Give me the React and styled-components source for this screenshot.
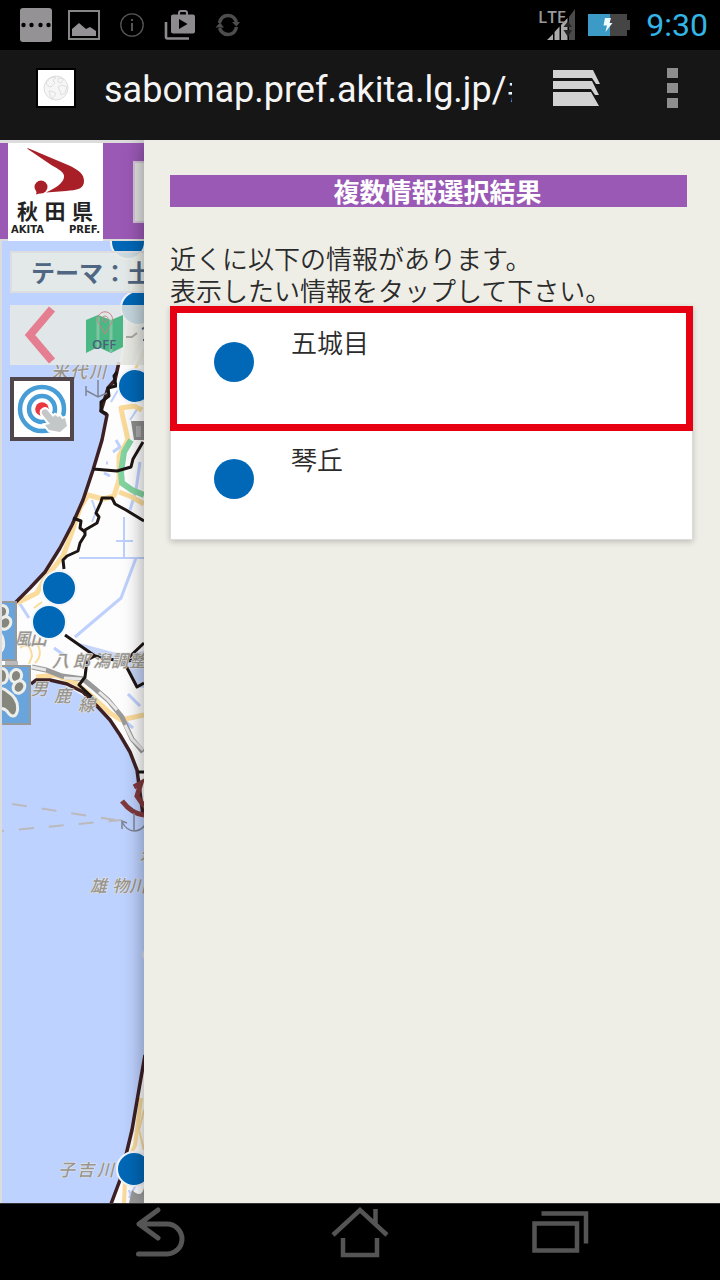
import React, { useState } from "react";
import styled, { createGlobalStyle } from "styled-components";

const GlobalStyle = createGlobalStyle`
  * {
    box-sizing: border-box;
  }
  body {
    margin: 0;
    background: #000;
    font-family: "Noto Sans CJK JP", "Noto Sans", sans-serif;
  }
  button {
    margin: 0;
    padding: 0;
    border: 0;
    background: none;
    font: inherit;
    color: inherit;
    text-align: left;
    cursor: pointer;
  }
  svg {
    display: block;
  }
`;

const Screen = styled.div`
  display: flex;
  flex-direction: column;
  min-height: 100vh;
`;

const StatusBar = styled.header`
  display: flex;
  align-items: center;
  justify-content: space-between;
  height: 50px;
  padding: 0 12px 0 20px;
  background: #000;
`;

const StatusGroup = styled.div`
  display: flex;
  align-items: center;
  gap: ${(props) => props.$gap}px;
`;

const Clock = styled.time`
  margin-left: 4px;
  font-family: Roboto, sans-serif;
  font-size: 32px;
  line-height: 32px;
  color: #33b5e5;
`;

const BrowserBar = styled.div`
  display: flex;
  align-items: center;
  height: 90px;
  padding: 0 42px 14px 36px;
  background: #161616;
`;

const Favicon = styled.div`
  display: flex;
  flex: none;
  align-items: center;
  justify-content: center;
  width: 40px;
  height: 40px;
  border: 2px solid #000;
  background: #fff;
`;

const UrlInput = styled.input`
  flex: 1;
  min-width: 0;
  height: 48px;
  margin: 4px 41px 0 28px;
  padding: 0;
  border: 0;
  outline: 0;
  background: transparent;
  font-family: Roboto, sans-serif;
  font-size: 36px;
  color: #f5f5f5;
`;

const TabsButton = styled.button`
  margin-right: 67px;
`;

const Content = styled.main`
  display: flex;
  flex: 1;
  overflow: hidden;
`;

const MapPane = styled.section`
  display: flex;
  flex: 0 0 20%;
  flex-direction: column;
  min-width: 0;
  overflow: hidden;
`;

const SiteHeader = styled.div`
  display: flex;
  align-items: flex-start;
  height: 101px;
  padding-left: 8px;
  border-top: 3px solid #dcdcdc;
  border-bottom: 2px solid #dcdcdc;
  background: #9b59b6;
`;

const Logo = styled.a`
  display: flex;
  flex: none;
  flex-direction: column;
  width: 95px;
  height: 98px;
  padding: 4px 3px 0;
  background: #fff;
  color: #222;
  text-decoration: none;
`;

const LogoName = styled.span`
  display: flex;
  justify-content: space-between;
  padding: 0 7px 0 6px;
  font-size: 21px;
  font-weight: 700;
  line-height: 26px;
`;

const LogoRoman = styled.span`
  display: flex;
  justify-content: space-between;
  font-family: "DejaVu Sans", sans-serif;
  font-size: 10px;
  font-weight: 700;
  line-height: 14px;
`;

const SearchInput = styled.input`
  flex: none;
  width: 200px;
  height: 62px;
  margin: 18px 0 0 30px;
  border: 2px solid #d2c8d6;
  background: #e2e2e2;
`;

const MapArea = styled.div`
  position: relative;
  flex: 1;
  overflow: hidden;
  border-left: 2px solid #dcdcdc;
  background: #bed2ff;
`;

const MapCanvas = styled.svg`
  position: absolute;
  top: 0;
  left: 0;
`;

const Tools = styled.div`
  position: relative;
  display: flex;
  flex-direction: column;
  align-items: flex-start;
  gap: 12px;
  padding: 10px 0 0 8px;
`;

const ThemeButton = styled.button`
  width: 200px;
  height: 42px;
  padding-left: 19px;
  border: 2px solid #dcdde0;
  background: rgba(232, 234, 229, 0.88);
  font-size: 24px;
  font-weight: 700;
  line-height: 36px;
  color: #4f6783;
`;

const ToolRow = styled.div`
  display: flex;
  align-items: center;
  width: 200px;
  height: 60px;
  background: rgba(232, 234, 229, 0.85);
`;

const TouchButton = styled.button`
  width: 64px;
  height: 64px;
  border: 4px solid #51464b;
  background: #fff;
`;

const PawButton = styled.button`
  position: absolute;
  top: ${(props) => props.$top}px;
  left: ${(props) => props.$left}px;
  width: 60px;
  height: 60px;
  border: 2px solid #979a98;
  background: #69a5dc;
`;

const Panel = styled.section`
  position: relative;
  flex: 1;
  min-width: 0;
  padding: 35px 27px 0 26px;
  background: #eeeee6;
  box-shadow: 0 0 20px rgba(0, 0, 0, 0.4);
  color: #2b2b2b;
`;

const PanelTitle = styled.h1`
  margin: 0 6px 35px 0;
  padding-left: 18px;
  background: #9b59b6;
  font-size: 26px;
  font-weight: 700;
  line-height: 32px;
  text-align: center;
  color: #fff;
`;

const Message = styled.p`
  margin: 0;
  font-size: 26px;
  font-weight: 350;
  line-height: 32px;
`;

const ResultList = styled.ul`
  margin: 0;
  padding: 0;
  list-style: none;
  background: #fff;
  box-shadow: 0 2px 6px rgba(0, 0, 0, 0.2);
`;

const ResultButton = styled.button`
  display: flex;
  align-items: flex-start;
  gap: 37px;
  width: 100%;
  height: ${(props) => (props.$selected ? 125 : 109)}px;
  padding: ${(props) => (props.$selected ? "13px 37px" : "12px 43px")};
  border: ${(props) => (props.$selected ? "7px solid #e60012" : "1px solid #dcdcdc")};
  border-top-width: ${(props) => (props.$selected ? 7 : 0)}px;
  font-size: 26px;
  font-weight: 350;
  line-height: 32px;
`;

const Dot = styled.span`
  flex: none;
  width: 40px;
  height: 40px;
  margin-top: 16px;
  border-radius: 50%;
  background: #0068b7;
`;

const NavBar = styled.nav`
  display: grid;
  grid-template-columns: repeat(3, 1fr);
  height: 77px;
  padding: 0 60px;
  border-top: 1px solid #333;
  background: #000;
`;

const NavButton = styled.button`
  display: flex;
  justify-content: center;
  padding-top: 2px;
`;

const RESULTS = [
  { id: 1, name: "五城目" },
  { id: 2, name: "琴丘" },
];

const PINS = [
  [128, 242],
  [138, 308],
  [135, 386],
  [59, 588],
  [49, 622],
  [134, 1169],
];

function NotificationIcons() {
  return (
    <StatusGroup $gap={16}>
      <svg width="32" height="34" viewBox="0 0 32 34">
        <rect width="32" height="34" rx="3" fill="#949294" />
        <g fill="#000">
          <circle cx="3.5" cy="17" r="2.2" />
          <circle cx="11.5" cy="17" r="2.2" />
          <circle cx="20.5" cy="17" r="2.2" />
          <circle cx="28.5" cy="17" r="2.2" />
        </g>
      </svg>
      <svg width="32" height="30" viewBox="0 0 32 30">
        <rect x="1" y="1" width="30" height="28" fill="none" stroke="#858785" strokeWidth="2" />
        <path d="M4 26V19L11 13L18 19L22 17L28 21V26Z" fill="#949294" />
      </svg>
      <svg width="32" height="32" viewBox="0 0 32 32" fill="none" stroke="#555">
        <circle cx="16" cy="16" r="11.2" strokeWidth="1.3" />
        <path d="M16 14V22" strokeWidth="2" />
        <path d="M16 10V12" strokeWidth="2" />
      </svg>
      <svg width="32" height="32" viewBox="0 0 32 32">
        <path d="M2 13V28Q2 29.5 3.5 29.5H25" fill="none" stroke="#8d8b8d" strokeWidth="2.6" />
        <path d="M15 6V4Q15 2 17 2H21Q23 2 23 4V6" fill="none" stroke="#8d8b8d" strokeWidth="2" />
        <rect x="7" y="5.5" width="24" height="19" rx="2" fill="#8d8b8d" />
        <path d="M15 10L23.5 15L15 20Z" fill="#000" />
      </svg>
      <svg width="32" height="32" viewBox="0 0 32 32">
        <path d="M7.5 14Q9 6.500 16 6.500Q22 6.500 24.500 13M24.500 18Q23 25.500 16 25.500Q10 25.500 7.500 19" fill="none" stroke="#4d4d4d" strokeWidth="3.5" />
        <path d="M20 13H28L24.5 17.500ZM3.500 18.500L8 13.5L12 18.500Z" fill="#4d4d4d" />
      </svg>
    </StatusGroup>
  );
}

function SystemIcons() {
  return (
    <StatusGroup $gap={12}>
      <svg width="37" height="34" viewBox="0 0 37 34">
        <path d="M8 32L14 26V32ZM15.500 24L20.500 18.500V32H15.500ZM22 17L28.500 10V32H22Z" fill="#aaa" />
        <path d="M30 9L36 1V32H30Z" fill="#4a4a4a" />
        <path d="M24.5 19L29 13L33 19ZM24.5 22H33L29 29Z" fill="#252525" />
        <text x="-1" y="14.5" fontFamily="'Open Sans', sans-serif" fontSize="17" fontWeight="600" fill="#999">LTE</text>
      </svg>
      <svg width="42" height="22" viewBox="0 0 42 22">
        <path d="M22 0H39V6H42V16H39V22H22Z" fill="#454545" />
        <rect width="22" height="22" fill="#3b9ac6" />
        <path d="M17 4H23L21.5 9H24.5L17.5 18L19 11.5H15.5Z" fill="#eefcff" />
      </svg>
      <Clock>9:30</Clock>
    </StatusGroup>
  );
}

function GlobeIcon() {
  return (
    <svg width="26" height="26" viewBox="0 0 26 26" fill="#f6f6f6" stroke="#dedede">
      <circle cx="13" cy="13" r="12" />
      <path d="M3 8L7 3L13 2L10 6L12 8L8 12L5 11ZM6 16L11 17L13 19L9 24L7 20ZM15 3L21 4L18 8L15 7ZM15 12L19 10L24 12L22 18L18 20L17 16Z" />
    </svg>
  );
}

function LogoMark() {
  return (
    <svg width="89" height="50" viewBox="11 147 89 50" fill="#a91f27">
      <path d="M27 148.5Q28 148 30 149L68 165C79 170 84 174 84 181C84 189 77 190 66 191L46 192.5C56 188 63 183 64 177.500C65 172 58 169 52 165.5Z" />
      <circle cx="41" cy="187" r="6.5" />
      <path d="M36 194.5L37 190L46 189L43 192.5Z" />
    </svg>
  );
}

function TouchIcon() {
  return (
    <svg width="56" height="56" viewBox="0 0 56 56" fill="none">
      <circle cx="28" cy="28" r="22" stroke="#479ed6" strokeWidth="4.5" />
      <circle cx="28" cy="28" r="13" stroke="#479ed6" strokeWidth="4.5" />
      <circle cx="28" cy="28" r="6.8" fill="#e9383f" />
      <path
        d="M29 29Q32 27 34 30L39 36L41 34L44 36L46 35L48 38L51 37L53 45L46 51L35 49L31 44L36 43L28 33Q27 30 29 29Z"
        fill="#c4c7c7"
        stroke="#fff"
        strokeWidth="4"
        paintOrder="stroke"
      />
    </svg>
  );
}

function PawIcon() {
  return (
    <svg width="56" height="56" viewBox="2 2 56 56" fill="#85877e" stroke="#eeeeea" strokeWidth="6" paintOrder="stroke">
      <ellipse cx="12" cy="22" rx="4" ry="6" />
      <ellipse cx="17" cy="11" rx="4" ry="6" />
      <ellipse cx="31" cy="11" rx="4" ry="6" />
      <ellipse cx="45" cy="11" rx="4" ry="5" transform="rotate(15 45 11)" />
      <ellipse cx="48" cy="22" rx="4" ry="5" transform="rotate(35 48 22)" />
      <path d="M20 30Q29 21 36 28Q46 34 45 45Q43 54 37 45Q30 38 22 47Q13 48 13 40Z" />
    </svg>
  );
}

function MapDrawing() {
  return (
    <MapCanvas width="142" height="962" viewBox="2 241 142 962" aria-hidden="true">
      {/* land */}
      <path
        d="M132 241L130 290L125 330L119 365L115 380L108 388L101 405L107 415L102 440L93 470L83 500L72 525L60 548L45 572L30 588L15 602L0 610V688L31 684L40 680L55 682L70 688L85 697L97 708L110 722L120 738L132 758L139 778L143 810H150V241Z"
        fill="#fdfdfd"
      />
      <path d="M144 1060L138 1095L132 1130L126 1155L120 1180L111 1204H150V1060Z" fill="#fdfdfd" />
      <path d="M132 290L126 330L122 365L133 365L143 340V260Z" fill="#e5dfd2" />

      {/* rivers and canals */}
      <g fill="none" stroke="#bed0fd" strokeWidth="2">
        <path d="M79 558H144M124 517V557M116 541H133" />
        <path d="M136 558L121 598L75 637" strokeWidth="3" />
        <path d="M104 473L110 476M106 463H108M113 452L120 447L116 440M140 462L136 490L130 510" strokeWidth="3" />
        <path d="M20 604L29 618M54 648L64 655M128 694L140 706M126 722L133 728" strokeWidth="3" />
        <path d="M130 398L138 408L130 420M118 390L111 402" />
        <path d="M92 500L96 512L92 522" />
        <path d="M129 1190L133 1203M137 1183L129 1198" />
      </g>
      <path d="M79 643L124 655L144 651V688L138 687L124 664L95 656Z" fill="#c6d5f8" />

      {/* roads */}
      <g fill="none" stroke="#fadb9b" strokeWidth="5" strokeLinejoin="round">
        <path d="M17 603L37 593L44 580L63 556L72 532L80 508L88 495L103 499L114 496L119 480V456L128 440L123 418L121 408L134 406L142 410" />
        <path d="M119 492L132 497L144 504" />
        <path d="M36 677L55 675L76 683L94 698L110 713L121 720L144 715" />
        <path d="M144 350L135 370" strokeWidth="3" />
        <path d="M141 1098L135 1145L131 1154M125 1178L124 1203" strokeWidth="4" />
        <path d="M144 1110L139 1130L144 1150" strokeWidth="2" />
        <path d="M20 648Q30 640 32 656L29 664M36 641Q44 655 35 663M34 608L42 602M36 618L42 613" strokeWidth="2" />
      </g>
      <path d="M131 440L124 452L121 472L122 483L132 490L144 495" fill="none" stroke="#82d39f" strokeWidth="6" />
      <path d="M131 421H144V440H134Z" fill="#8c8c8c" />
      <path d="M136 426H141V437H136Z" fill="#aaa" />

      {/* railway */}
      <path d="M32 667L46 670L62 676L83 679L94 688L108 700L122 717L132 739L143 752" fill="none" stroke="#999" strokeWidth="5" />
      <path d="M32 667L46 670M64 678L83 679M99 692L108 700L117 710M125 725L132 739L143 750" fill="none" stroke="#e8e8e8" strokeWidth="3" />
      <path d="M5 663H18" stroke="#bbb" strokeWidth="4" />

      {/* coast line */}
      <g fill="none" stroke="#3d2024" strokeWidth="3.5" strokeLinejoin="round">
        <path d="M119 362L115 380L108 388L101 411L107 415L102 440L93 470L83 500L72 525L60 548L45 572L30 588L14 604" />
        <path d="M31 684L36 680L50 680L67 684L83 692L97 706L110 720L120 735L130 752L137 770L141 800L143 815" />
        <path d="M145 1055L138 1095L132 1130L126 1155L120 1180L111 1204" />
      </g>
      <path d="M122 801Q132 814 144 815M134 787L141 783L137 796L144 806" fill="none" stroke="#80393c" strokeWidth="5" />

      {/* city borders */}
      <g fill="none" stroke="#1c1513" strokeWidth="3" strokeLinejoin="round">
        <path d="M117 372L114 376L116 386L108 388L109 396L101 402V411L107 414" />
        <path d="M93 469L117 471L131 467L133 459L143 442" />
        <path d="M64 569L63 560L67 556L78 551L80 543L85 535V530L97 523L99 517L96 513L101 502L102 498H112L115 504L126 510L144 521" />
        <path d="M73 518L81 521L80 528L85 532" />
        <path d="M65 635L95 656L124 662L144 657M124 662L144 643M124 662L137 687L144 683M95 656L87 660L85 677L79 685L92 697L91 704" />
        <path d="M138 772H144" />
      </g>

      {/* ferry routes */}
      <path d="M12 804L122 821" fill="none" stroke="#bbb9bb" strokeWidth="2" strokeDasharray="15 15" />
      <path d="M2 831L122 820" fill="none" stroke="#bbb9bb" strokeWidth="2" strokeDasharray="15 15" strokeDashoffset="13" />
      <g fill="none" stroke="#7f8495" strokeWidth="1.5">
        <path d="M134 813V830M122 822Q127 831 134 831Q141 831 145 825M122 829V821L127 823" />
        <path d="M98 380V397M87 391L98 397L107 393M86 386V396" />
      </g>

      <g
        fontFamily="'Noto Sans CJK JP', sans-serif"
        fontSize="17"
        fontStyle="italic"
        fontWeight="500"
        fill="#99968f"
        stroke="#e8e8e8"
        strokeWidth="1"
        paintOrder="stroke"
      >
        <text x="51 70 89" y="378">米代川</text>
        <text x="14 30" y="645">風山</text>
        <text x="52 73 93 111 129" y="667">八郎潟調整</text>
        <text x="31 54 78" y="695 702 711">男鹿線</text>
        <text x="90 112 129" y="892">雄物川</text>
        <text x="58 77 97" y="1176">子吉川</text>
        <text x="140" y="860">道</text>
      </g>

      <g fill="#0068b7" stroke="#f2f5fb" strokeWidth="2">
        {PINS.map(([x, y]) => (
          <circle key={`${x}-${y}`} cx={x} cy={y} r="17" />
        ))}
      </g>
      <path d="M132 1190Q141 1199 144 1188V1203H129Z" fill="#999" />
      <circle cx="148" cy="955" r="6" fill="#dde3ef" />
    </MapCanvas>
  );
}

function MapSide() {
  return (
    <MapPane>
      <SiteHeader>
        <Logo href="#top" aria-label="秋田県">
          <LogoMark />
          <LogoName>
            <span>秋</span>
            <span>田</span>
            <span>県</span>
          </LogoName>
          <LogoRoman>
            <span>AKITA</span>
            <span>PREF.</span>
          </LogoRoman>
        </Logo>
        <SearchInput type="text" aria-label="検索" />
      </SiteHeader>
      <MapArea>
        <MapDrawing />
        <Tools>
          <ThemeButton type="button">テーマ：土</ThemeButton>
          <ToolRow>
            <button type="button" aria-label="戻る">
              <svg width="60" height="60" viewBox="0 0 60 60" fill="none">
                <path d="M42 4L20 30L42 56" stroke="#e57e91" strokeWidth="8" />
              </svg>
            </button>
            <button type="button" aria-label="地図 OFF">
              <svg width="70" height="60" viewBox="70 305 70 60">
                <path d="M86 320L98 315L111 320L123 315V347L111 353L98 347L86 353Z" fill="#4bb784" />
                <path d="M98 317V347M111 320V352" stroke="#7dc6a1" strokeWidth="3" />
                <path d="M105 334L98 322A7.5 7.5 0 1 1 112 322ZM105 316a3 3 0 1 0 .1 0" fill="none" stroke="#c9837f" />
                <text x="92" y="349" fontFamily="'Open Sans', sans-serif" fontSize="13" fontWeight="600" fill="#47617b">OFF</text>
                <path d="M126 337H132L137 333" fill="none" stroke="#a9a8a2" strokeWidth="2" />
              </svg>
            </button>
            <svg width="8" height="20" viewBox="0 0 8 20">
              <path d="M2 4L6 2M3 15H7" stroke="#4f6783" strokeWidth="2" />
            </svg>
          </ToolRow>
          <TouchButton type="button" aria-label="タップ">
            <TouchIcon />
          </TouchButton>
        </Tools>
        <PawButton type="button" aria-label="クマ" $top={360} $left={-45}>
          <PawIcon />
        </PawButton>
        <PawButton type="button" aria-label="クマ" $top={424} $left={-31}>
          <PawIcon />
        </PawButton>
      </MapArea>
    </MapPane>
  );
}

function App() {
  const [url, setUrl] = useState("sabomap.pref.akita.lg.jp/#");
  const [selected, setSelected] = useState(1);

  return (
    <Screen>
      <GlobalStyle />
      <StatusBar>
        <NotificationIcons />
        <SystemIcons />
      </StatusBar>
      <BrowserBar>
        <Favicon>
          <GlobeIcon />
        </Favicon>
        <UrlInput
          type="text"
          aria-label="URL"
          value={url}
          onChange={(e) => setUrl(e.target.value)}
        />
        <TabsButton type="button" aria-label="タブ">
          <svg width="47" height="36" viewBox="0 0 47 36" fill="#d2d2d2">
            <path d="M0 0H40L47 14H43L39 8H0ZM0 11H39L46 25H42L38 19H0ZM0 22H38L46 36H0Z" />
          </svg>
        </TabsButton>
        <button type="button" aria-label="メニュー">
          <svg width="11" height="40" viewBox="0 0 11 40" fill="#8e8e8e">
            <path d="M0 0H11V10H0ZM0 15H11V25H0ZM0 30H11V40H0Z" />
          </svg>
        </button>
      </BrowserBar>
      <Content>
        <MapSide />
        <Panel>
          <PanelTitle>複数情報選択結果</PanelTitle>
          <Message>
            近くに以下の情報があります。
            <br />
            表示したい情報をタップして下さい。
          </Message>
          <ResultList>
            {RESULTS.map((result) => (
              <li key={result.id}>
                <ResultButton
                  type="button"
                  $selected={result.id === selected}
                  onClick={() => setSelected(result.id)}
                >
                  <Dot />
                  {result.name}
                </ResultButton>
              </li>
            ))}
          </ResultList>
        </Panel>
      </Content>
      <NavBar>
        <NavButton type="button" aria-label="戻る">
          <svg width="60" height="56" viewBox="130 1206 60 56" fill="none" stroke="#555" strokeWidth="5" strokeLinecap="round" strokeLinejoin="round">
            <path d="M158 1210L139 1224L158 1238M139 1224H167A15 15 0 0 1 167 1254H138.5" />
          </svg>
        </NavButton>
        <NavButton type="button" aria-label="ホーム">
          <svg width="60" height="56" viewBox="330 1206 60 56" fill="none" stroke="#555" strokeWidth="4.5">
            <path d="M333 1235L360 1210L387 1235M375.5 1209V1224M343 1238V1255H377V1238" />
          </svg>
        </NavButton>
        <NavButton type="button" aria-label="履歴">
          <svg width="60" height="56" viewBox="530 1206 60 56" fill="none" stroke="#555" strokeWidth="4.5">
            <path d="M534.5 1223.5H577V1250.5H534.5ZM541.5 1213.5H586V1243.5" />
          </svg>
        </NavButton>
      </NavBar>
    </Screen>
  );
}

export default App;
